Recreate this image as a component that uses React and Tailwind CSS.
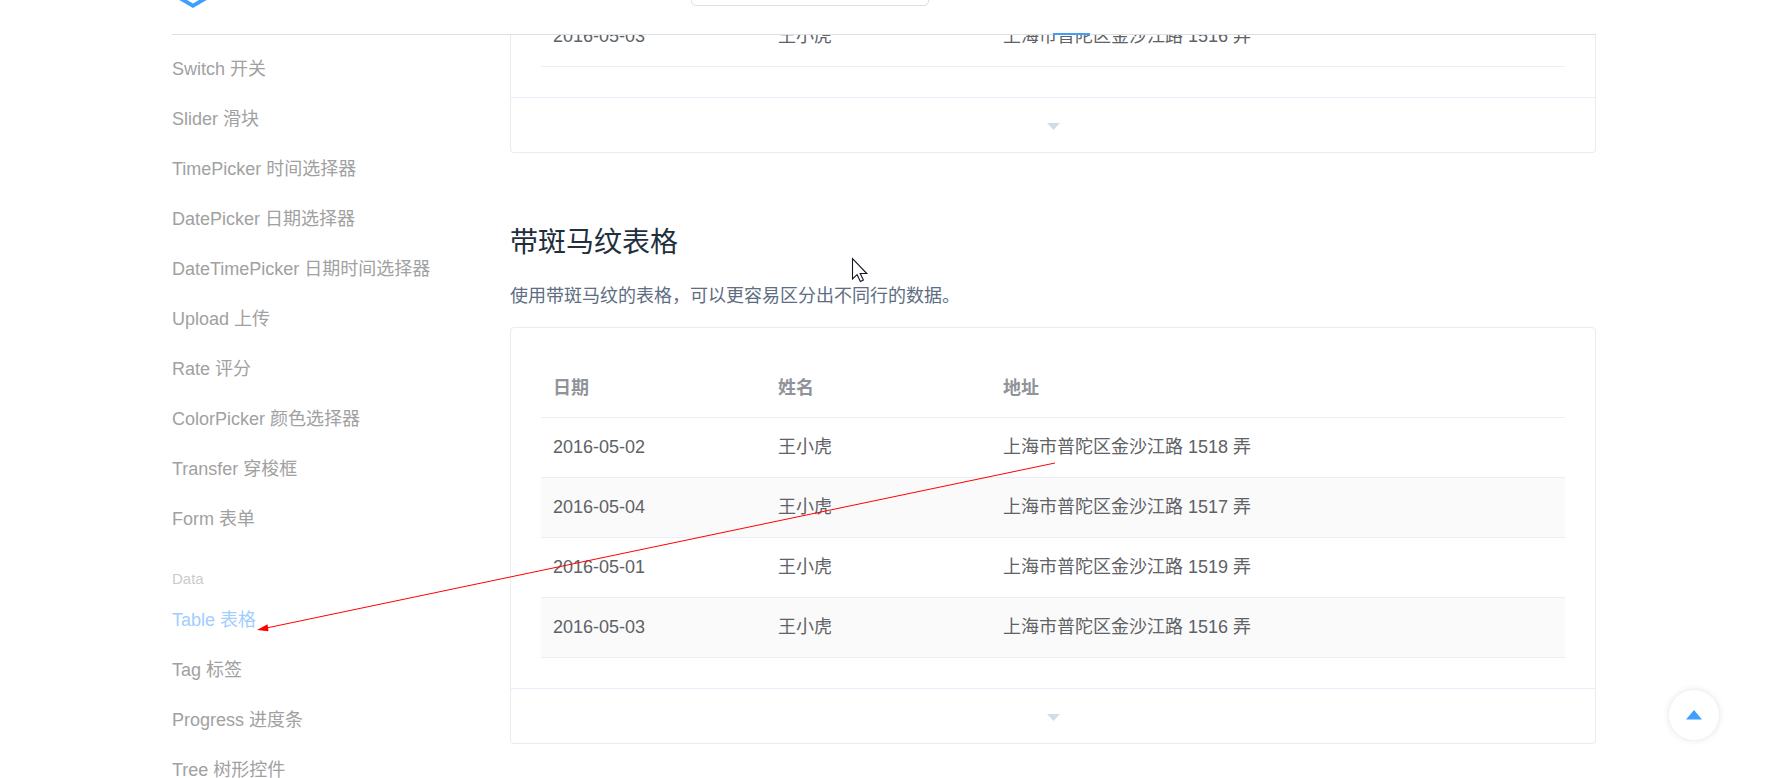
const GROUPS = [
  {
    items: [
      "Switch 开关",
      "Slider 滑块",
      "TimePicker 时间选择器",
      "DatePicker 日期选择器",
      "DateTimePicker 日期时间选择器",
      "Upload 上传",
      "Rate 评分",
      "ColorPicker 颜色选择器",
      "Transfer 穿梭框",
      "Form 表单",
    ],
  },
  {
    title: "Data",
    items: ["Table 表格", "Tag 标签", "Progress 进度条", "Tree 树形控件"],
  },
];

const ACTIVE = "Table 表格";

const ROWS = [
  { date: "2016-05-02", name: "王小虎", address: "上海市普陀区金沙江路 1518 弄" },
  { date: "2016-05-04", name: "王小虎", address: "上海市普陀区金沙江路 1517 弄" },
  { date: "2016-05-01", name: "王小虎", address: "上海市普陀区金沙江路 1519 弄" },
  { date: "2016-05-03", name: "王小虎", address: "上海市普陀区金沙江路 1516 弄" },
];

function Header() {
  return (
    <header className="absolute inset-x-0 -top-[65px] z-10 bg-white">
      <div className="mx-auto flex h-[100px] max-w-[1424px] items-center border-b border-[#dcdfe6]">
        <a href="#home" aria-label="Home" className="ml-[3px] block">
          <svg className="block h-[47px] w-9" viewBox="0 0 36 47">
            <path
              d="M18 0 36 10.500v26L18 47 0 36.500v-26zM18 5 4.500 12.500v22L18 42.500l13.500-8v-22z"
              fill="#409eff"
              fillRule="evenodd"
            />
          </svg>
        </a>
        <input
          type="search"
          aria-label="Search"
          className="ml-[480px] h-[42px] w-[238px] rounded-[5px] border border-[#dcdfe6] bg-white"
        />
        <nav className="ml-[124px] self-stretch">
          <a
            href="#component"
            aria-label="Components"
            className="-mb-px block h-[100px] w-[37px] border-b-2 border-[#409eff]"
          />
        </nav>
      </div>
    </header>
  );
}

function Sidebar() {
  return (
    <nav className="w-[338px] shrink-0 pt-11">
      {GROUPS.map((group, i) => (
        <section key={i}>
          {group.title && (
            <h2 className="mt-[19px] text-[15px] leading-8 text-[#cbcbcb]">{group.title}</h2>
          )}
          <ul>
            {group.items.map((item) => (
              <li key={item}>
                <a
                  href="#component"
                  className={
                    item === ACTIVE
                      ? "block h-[50px] whitespace-nowrap leading-[50px] text-[#9fceff]"
                      : "block h-[50px] whitespace-nowrap leading-[50px] text-[#a1a1a1]"
                  }
                >
                  {item}
                </a>
              </li>
            ))}
          </ul>
        </section>
      ))}
    </nav>
  );
}

function DataTable({ rows, header, striped }) {
  return (
    <table className="w-full table-fixed border-separate border-spacing-0 text-left text-[#606266]">
      <colgroup>
        <col className="w-[225px]" />
        <col className="w-[225px]" />
        <col />
      </colgroup>
      {header && (
        <thead className="text-[#909399]">
          <tr>
            {["日期", "姓名", "地址"].map((label) => (
              <th key={label} className="h-[60px] border-b border-[#ebeef5] px-3 font-bold">
                {label}
              </th>
            ))}
          </tr>
        </thead>
      )}
      <tbody>
        {rows.map((row, i) => (
          <tr key={row.date} className={striped && i % 2 ? "bg-[#fafafa]" : ""}>
            <td className="h-[60px] border-b border-[#ebeef5] px-3 pb-0.5">{row.date}</td>
            <td className="h-[60px] border-b border-[#ebeef5] px-3 pb-0.5">{row.name}</td>
            <td className="h-[60px] border-b border-[#ebeef5] px-3 pb-0.5">{row.address}</td>
          </tr>
        ))}
      </tbody>
    </table>
  );
}

function Expand() {
  return (
    <button
      type="button"
      aria-label="Show code"
      className="flex h-[55px] w-full items-center justify-center border-t border-[#eaeefb] pt-0.5"
    >
      <svg className="h-[7px] w-[13px]" viewBox="0 0 13 7">
        <path d="M0 0h13L6.500 7z" fill="#d3dce6" />
      </svg>
    </button>
  );
}

function Overlay() {
  return (
    <svg
      className="pointer-events-none absolute left-0 top-0 z-20 h-[700px] w-[900px]"
      viewBox="0 0 900 700"
      aria-hidden="true"
    >
      <path d="M883 463 92 628.500" stroke="#ff0000" strokeWidth="1" fill="none" />
      <path d="M85 630 95.500 624.200 96.500 631.200z" fill="#ff0000" />
      <path
        d="M680.500 258.500v20.500l4.600-4.300 3.300 6.800 3-1.400-3.200-6.600h6.600z"
        fill="#fff"
        stroke="#15151f"
        strokeWidth="1.100"
      />
    </svg>
  );
}

export default function App() {
  return (
    <div className="relative h-screen overflow-hidden bg-white font-['Liberation_Sans','Noto_Sans_CJK_SC',sans-serif] text-[18px] leading-[28px]">
      <Header />
      <div className="relative mx-auto flex max-w-[1424px]">
        <Sidebar />
        <main className="min-w-0 flex-1 pt-[7px]">
          <div className="rounded-b-[4px] border border-t-0 border-[#ebebeb]">
            <div className="px-[30px] pb-[30px]">
              <DataTable rows={ROWS.slice(3)} />
            </div>
            <Expand />
          </div>
          <h3 className="mt-[72px] text-[28px] font-normal leading-9 text-[#1f2f3d]">
            带斑马纹表格
          </h3>
          <p className="mt-[21px] text-[#5e6d82]">
            使用带斑马纹的表格，可以更容易区分出不同行的数据。
          </p>
          <div className="mt-[17px] rounded-[4px] border border-[#ebebeb]">
            <div className="p-[30px]">
              <DataTable rows={ROWS} header striped />
            </div>
            <Expand />
          </div>
        </main>
        <Overlay />
      </div>
      <button
        type="button"
        aria-label="Back to top"
        className="absolute bottom-[38px] right-[49px] flex size-[50px] items-center justify-center rounded-full bg-white shadow-[0_0_7px_rgba(0,0,0,0.12)]"
      >
        <svg className="h-[10px] w-4" viewBox="0 0 16 10">
          <path d="M8 0 16 9.500H0z" fill="#409eff" />
        </svg>
      </button>
    </div>
  );
}
